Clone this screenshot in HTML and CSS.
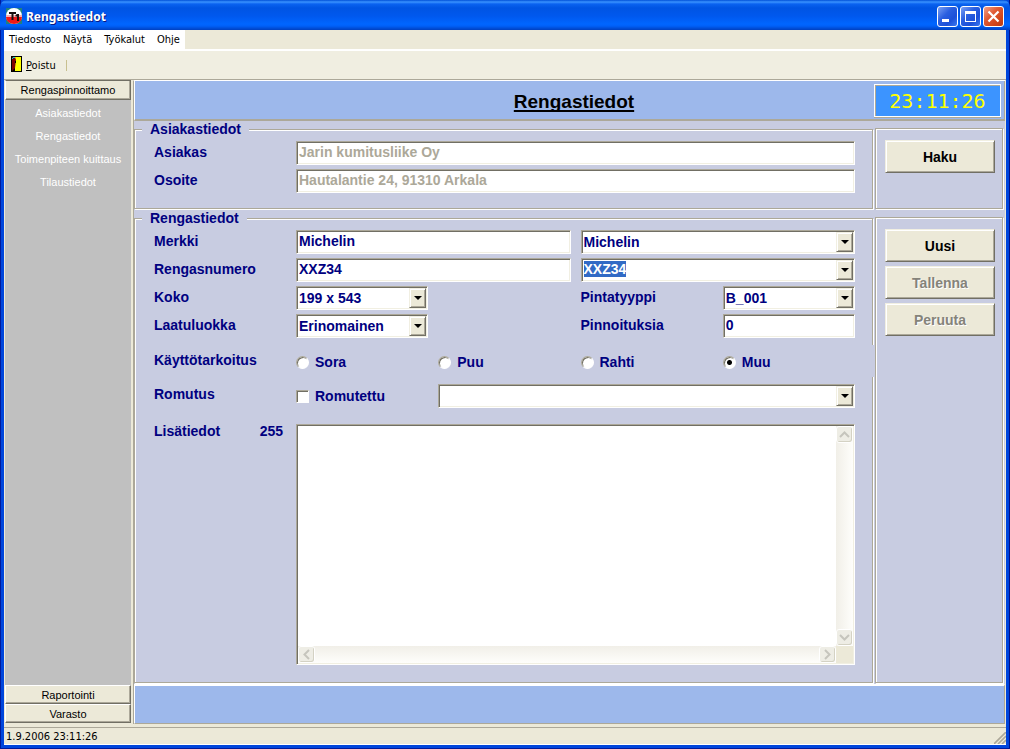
FILE: index.html
```html
<!DOCTYPE html>
<html lang="fi">
<head>
<meta charset="utf-8">
<title>Rengastiedot</title>
<link rel="stylesheet" href="styles.css">
</head>
<body>
<div class="window">
  <header class="titlebar">
    <svg class="app-icon" width="16" height="16" viewBox="0 0 16 16" aria-hidden="true">
      <rect width="16" height="16" fill="#1f8080"/>
      <circle cx="8" cy="8" r="8" fill="#fff"/>
      <path d="M0 9h16a8 7 0 0 1-16 0z" fill="#f01818"/>
      <path d="M0 7h16v2H0z" fill="#f8b0b0"/>
      <path d="M3 4h7v2H7.500v6h-2V6H3zM11 6h2v7h-2V8.500H9.500V7z" fill="#181010"/>
    </svg>
    <h1 class="titlebar-text">Rengastiedot</h1>
    <button class="caption-btn" type="button" aria-label="Pienennä"><svg width="19" height="19" viewBox="0 0 19 19"><path d="M4 12h7v3H4z" fill="#fff"/></svg></button>
    <button class="caption-btn" type="button" aria-label="Suurenna"><svg width="19" height="19" viewBox="0 0 19 19"><path d="M4 4h11v11H4zM5 7v7h9V7z" fill="#fff" fill-rule="evenodd"/></svg></button>
    <button class="caption-btn caption-close" type="button" aria-label="Sulje"><svg width="19" height="19" viewBox="0 0 19 19"><path d="M4.500 4.500l10 10M14.500 4.500l-10 10" stroke="#fff" stroke-width="2.200"/></svg></button>
  </header>

  <div class="client">
    <nav class="menubar">
      <div class="menu-items">
        <button type="button">Tiedosto</button>
        <button type="button">Näytä</button>
        <button type="button">Työkalut</button>
        <button type="button">Ohje</button>
      </div>
    </nav>
    <div class="toolbar">
      <button class="tool-btn" type="button">
        <svg width="11" height="16" viewBox="0 0 11 16" aria-hidden="true">
          <path d="M0 0h11v16H0z" fill="#000"/>
          <path d="M4 1h6v14H4z" fill="#ff0"/>
          <path d="M1 1h3l1 3-1 8-3 3z" fill="#800000"/>
          <path d="M2 1h2v1H2zM1 2h1v1H1z" fill="#00d8d8"/>
          <path d="M4 5h1v2H4z" fill="#000"/>
        </svg>
        <span><u>P</u>oistu</span>
      </button>
      <span class="tool-sep"></span>
    </div>

    <div class="workspace">
      <aside class="sidebar">
        <button class="side-head" type="button">Rengaspinnoittamo</button>
        <ul class="side-list">
          <li><a href="#">Asiakastiedot</a></li>
          <li><a href="#">Rengastiedot</a></li>
          <li><a href="#">Toimenpiteen kuittaus</a></li>
          <li><a href="#">Tilaustiedot</a></li>
        </ul>
        <button class="side-head" type="button">Raportointi</button>
        <button class="side-head" type="button">Varasto</button>
      </aside>

      <main class="main">
        <div class="banner">
          <h2 class="banner-title">Rengastiedot</h2>
          <time class="clock">23:11:26</time>
        </div>

        <form class="content">
          <fieldset class="group">
            <legend>Asiakastiedot</legend>
            <div class="rows">
              <div class="row">
                <label for="asiakas">Asiakas</label>
                <input class="field span4" id="asiakas" type="text" value="Jarin kumitusliike Oy" disabled>
              </div>
              <div class="row">
                <label for="osoite">Osoite</label>
                <input class="field span4" id="osoite" type="text" value="Hautalantie 24, 91310 Arkala" disabled>
              </div>
            </div>
          </fieldset>
          <div class="actions">
            <button class="btn" type="button">Haku</button>
          </div>

          <fieldset class="group">
            <legend>Rengastiedot</legend>
            <div class="rows">
              <div class="row">
                <label for="merkki">Merkki</label>
                <input class="field span2" id="merkki" type="text" value="Michelin">
                <div class="combo span2">
                  <select class="field" aria-label="Merkki, valinta"><option>Michelin</option></select>
                  <span class="arrow"></span>
                </div>
              </div>
              <div class="row">
                <label for="numero">Rengasnumero</label>
                <input class="field span2" id="numero" type="text" value="XXZ34">
                <div class="combo span2">
                  <input class="field" id="numero-valinta" type="text" value="XXZ34" aria-label="Rengasnumero, valinta">
                  <button class="arrow" type="button" aria-label="Avaa luettelo"></button>
                </div>
              </div>
              <div class="row">
                <label for="koko">Koko</label>
                <div class="combo">
                  <select class="field" id="koko"><option>199 x 543</option></select>
                  <span class="arrow"></span>
                </div>
                <label class="third" for="pinta">Pintatyyppi</label>
                <div class="combo">
                  <select class="field" id="pinta"><option>B_001</option></select>
                  <span class="arrow"></span>
                </div>
              </div>
              <div class="row">
                <label for="laatu">Laatuluokka</label>
                <div class="combo">
                  <select class="field" id="laatu"><option>Erinomainen</option></select>
                  <span class="arrow"></span>
                </div>
                <label class="third" for="pinnoituksia">Pinnoituksia</label>
                <input class="field" id="pinnoituksia" type="text" value="0">
              </div>
              <div class="row row-use" role="radiogroup" aria-labelledby="kaytto">
                <span id="kaytto">Käyttötarkoitus</span>
                <label class="choice"><input type="radio" name="kaytto">Sora</label>
                <label class="choice"><input type="radio" name="kaytto">Puu</label>
                <label class="choice"><input type="radio" name="kaytto">Rahti</label>
                <label class="choice"><input type="radio" name="kaytto" checked>Muu</label>
              </div>
              <div class="row row-scrap">
                <span>Romutus</span>
                <label class="choice"><input type="checkbox">Romutettu</label>
                <div class="combo span3">
                  <select class="field" aria-label="Romutuksen syy"><option></option></select>
                  <span class="arrow"></span>
                </div>
              </div>
              <div class="row row-notes">
                <div class="notes-label"><label for="lisa">Lisätiedot</label><output>255</output></div>
                <div class="memo span4">
                  <textarea id="lisa"></textarea>
                  <div class="vbar">
                    <span class="sbtn"><svg width="11" height="9" viewBox="0 0 11 9"><path d="M1 7l4.500-4.500L10 7"/></svg></span>
                    <span class="sbtn"><svg width="11" height="9" viewBox="0 0 11 9"><path d="M1 2l4.500 4.500L10 2"/></svg></span>
                  </div>
                  <div class="hbar">
                    <span class="sbtn"><svg width="9" height="11" viewBox="0 0 9 11"><path d="M7 1L2.500 5.500 7 10"/></svg></span>
                    <span class="sbtn"><svg width="9" height="11" viewBox="0 0 9 11"><path d="M2 1l4.500 4.500L2 10"/></svg></span>
                  </div>
                </div>
              </div>
            </div>
          </fieldset>
          <div class="actions">
            <button class="btn" type="button">Uusi</button>
            <button class="btn" type="button" disabled>Tallenna</button>
            <button class="btn" type="button" disabled>Peruuta</button>
          </div>
        </form>

        <div class="footer-band"></div>
      </main>
    </div>

    <footer class="statusbar">
      <span>1.9.2006 23:11:26</span>
      <svg width="12" height="12" viewBox="0 0 12 12" aria-hidden="true"><path d="M0 12L12 0M4 12l8-8M8 12l4-4" stroke="#aca899" stroke-width="1.600"/></svg>
    </footer>
  </div>
</div>
<script src="app.js"></script>
</body>
</html>
```
FILE: styles.css
```css
* { box-sizing: border-box; }

body {
  margin: 0;
  font-family: "Liberation Sans", Arial, sans-serif;
  font-size: 11px;
  color: #000;
}

button, input, select, textarea { font: inherit; color: inherit; border-radius: 0; }
button { padding: 0; border: 0; background: none; }

.window {
  display: flex;
  flex-direction: column;
  height: 100vh;
  padding: 0 4px 4px;
  background: #0046dc;
  box-shadow: inset 1px -1px 0 #001a9c, inset -1px 0 0 #00138c;
}

/* Title bar */
.titlebar {
  display: flex;
  align-items: center;
  gap: 2px;
  flex: none;
  height: 30px;
  margin: 0 -4px;
  padding: 2px 6px 0;
  border-radius: 7px 7px 0 0;
  background: linear-gradient(#0050d8 0, #3a93ff 2px, #0a62f0 4px, #0054e3 8px, #0058ee 16px, #0066ff 24px, #0060f8 26px, #0040c0 30px);
}
.titlebar-text {
  flex: 1;
  margin: 2px 0 0 2px;
  font: bold 12px/20px "Noto Sans", sans-serif;
  color: #fff;
  text-shadow: 1px 1px 0 #0a1883;
}
.caption-btn {
  width: 21px;
  height: 21px;
  border: 1px solid #fff;
  border-radius: 3px;
  background: linear-gradient(135deg, #7aa0f4, #2a5fe0 40%, #1c50d8 70%, #3a78f0);
}
.caption-btn svg { display: block; }
.caption-close { background: linear-gradient(135deg, #f0a088, #e05a34 40%, #d04418 75%, #b83c18); }

.client {
  display: flex;
  flex-direction: column;
  flex: 1;
  min-height: 0;
  background: #ece9d8;
  font-family: "DejaVu Sans Condensed", "DejaVu Sans", sans-serif;
}

/* Menu and toolbar */
.menubar {
  display: flex;
  height: 21px;
  border-bottom: 2px solid #fff;
}
.menu-items {
  display: flex;
  gap: 12px;
  padding: 0 5px;
  background: #fff;
}
.toolbar {
  display: flex;
  align-items: center;
  gap: 10px;
  height: 28px;
  padding: 0 7px;
  background: #f0eee1;
}
.tool-btn { display: flex; align-items: center; gap: 4px; }
.tool-btn svg { margin-bottom: 2px; }
.tool-sep { width: 1px; height: 11px; background: #c8c090; }

.workspace {
  display: flex;
  flex: 1;
  gap: 2px;
  min-height: 0;
  border-top: 1px solid #aca899;
}

/* Sidebar */
.sidebar {
  display: flex;
  flex-direction: column;
  width: 126px;
  margin: 0 0 1px 1px;
  background: #c0c0c0;
  font-family: "Liberation Sans", Arial, sans-serif;
}
.side-head {
  height: 19px;
  border: 1px solid;
  border-color: #fff #716f64 #716f64 #fff;
  box-shadow: inset -1px -1px 0 #aca899;
  background: #ece9d8;
}
.side-head:first-child { height: 20px; border-top-color: #716f64; }
.side-list {
  flex: 1;
  margin: 0;
  padding: 2px 0;
  list-style: none;
  text-align: center;
  line-height: 23px;
}
.side-list a { color: #fff; text-decoration: none; }

/* Main panel */
.main {
  display: flex;
  flex-direction: column;
  flex: 1;
  min-width: 0;
  margin-right: 1px;
  border-left: 1px solid #aca899;
  border-top: 1px solid #fff;
  background: #c8cce1;
  font-family: "Liberation Sans", Arial, sans-serif;
}
.banner {
  display: grid;
  grid-template-columns: 1fr auto 1fr;
  align-items: center;
  height: 40px;
  padding: 0 3px 0 12px;
  border-left: 1px solid #fff;
  border-right: 1px solid #aca899;
  border-bottom: 2px solid #aca899;
  background: #9db8eb;
}
.banner-title {
  grid-column: 2;
  margin: 4px 0 0;
  font-size: 19px;
  line-height: 24px;
  text-decoration: underline;
  text-decoration-thickness: 2px;
  text-underline-offset: 2px;
  text-decoration-skip-ink: none;
}
.clock {
  justify-self: end;
  width: 127px;
  padding-top: 1px;
  border: 1px solid #fff;
  box-shadow: inset 1px 1px 0 #aca899, 0 1px 0 #aca899;
  background: #3c94ff;
  color: #ff0;
  font: 20px/30px "DejaVu Sans Mono", monospace;
  text-align: center;
}

.content {
  display: grid;
  grid-template-columns: minmax(0, 1fr) 128px;
  grid-template-rows: 88px minmax(0, 1fr);
  gap: 1px 2px;
  flex: 1;
  min-height: 0;
  padding: 0 2px 1px 0;
  color: #000080;
  font-size: 14px;
  font-weight: bold;
  line-height: 16px;
}
.group {
  display: flex;
  flex-direction: column;
  min-width: 0;
  margin: 0;
  padding: 4px 17px 17px 19px;
  border: 1px solid #aca899;
  box-shadow: 1px 1px 0 #fff, inset 1px 1px 0 #fff;
}
.group legend {
  margin-left: -12px;
  padding: 0 8px;
  background: #c8cce1;
}
.rows { display: flex; flex-direction: column; flex: 1; gap: 4px; min-height: 0; }
.row {
  display: grid;
  grid-template-columns: 132px repeat(4, minmax(0, 1fr));
  column-gap: 10px;
  line-height: 22px;
}
.span2 { grid-column: span 2; }
.span3 { grid-column: span 3; }
.span4 { grid-column: span 4; }
.third { grid-column: 4; }

.field {
  width: 100%;
  height: 24px;
  padding: 0 2px 2px;
  appearance: none;
  outline: none;
  border: 1px solid;
  border-color: #aca899 #fff #fff #aca899;
  box-shadow: inset 1px 1px 0 #716f64, inset -1px -1px 0 #f1efe2;
  background: #fff;
}
.field:disabled { color: #aca899; opacity: 1; }
.field::selection { background: #316ac5; color: #fff; }
.combo { position: relative; }
.combo .field { display: block; padding-right: 20px; }
.combo select.field { padding-bottom: 4px; }
.arrow {
  position: absolute;
  top: 2px;
  right: 2px;
  display: flex;
  align-items: center;
  justify-content: center;
  width: 17px;
  height: 20px;
  border: 1px solid;
  border-color: #f1efe2 #716f64 #716f64 #f1efe2;
  box-shadow: inset 1px 1px 0 #fff, inset -1px -1px 0 #aca899;
  background: #ece9d8;
  pointer-events: none;
}
.arrow::before {
  content: "";
  border: 4px solid transparent;
  border-top-color: #000;
  border-bottom: 0;
}

.row-use {
  position: relative;
  height: 32px;
  margin: 3px -19px 3px 0;
  padding: 4px 19px 4px 0;
  background: #c8cce1;
}
.choice { display: flex; align-items: center; gap: 6px; height: 24px; }
.row-use .choice { height: 26px; }
.choice input {
  width: 13px;
  height: 13px;
  margin: 0;
  appearance: none;
  border: 1px solid;
  border-color: #aca899 #fff #fff #aca899;
  box-shadow: inset 1px 1px 0 #716f64;
  background: #fff;
}
.choice input[type="radio"] { border-radius: 50%; }
.choice input[type="radio"]:checked { background: radial-gradient(circle, #000 2px, #fff 3px); }
.row-scrap { line-height: 20px; }

.row-notes { flex: 1; min-height: 0; margin-top: 12px; line-height: 14px; }
.notes-label { display: flex; justify-content: space-between; padding-right: 3px; }
.memo {
  display: grid;
  grid-template: minmax(0, 1fr) 17px / minmax(0, 1fr) 17px;
  padding: 1px;
  border: 1px solid;
  border-color: #aca899 #fff #fff #aca899;
  box-shadow: inset 1px 1px 0 #716f64, inset -1px -1px 0 #f1efe2;
  background: #ece9d8;
}
.memo textarea {
  width: 100%;
  height: 100%;
  padding: 2px;
  border: 0;
  outline: none;
  resize: none;
  overflow: hidden;
}
.vbar, .hbar { display: flex; justify-content: space-between; }
.vbar { flex-direction: column; background: linear-gradient(90deg, #f1efe8, #fefefb); }
.hbar { background: linear-gradient(#f1efe8, #fefefb); }
.sbtn {
  display: grid;
  place-items: center;
  width: 17px;
  height: 17px;
  border: 1px solid #fff;
  border-radius: 3px;
  box-shadow: inset -1px -1px 0 #d4d2c4;
  background: #eeede5;
}
.sbtn path { fill: none; stroke: #c6c5bd; stroke-width: 2; }

/* Action buttons */
.actions {
  display: flex;
  flex-direction: column;
  gap: 4px;
  margin-top: 7px;
  padding: 11px 7px 11px 9px;
  border: 1px solid #aca899;
  box-shadow: 1px 1px 0 #fff, inset 1px 1px 0 #fff;
}
.btn {
  height: 33px;
  border: 1px solid;
  border-color: #f1efe2 #716f64 #716f64 #f1efe2;
  box-shadow: inset 1px 1px 0 #fff, inset -1px -1px 0 #aca899;
  background: #ece9d8;
  color: #000;
}
.btn:disabled { color: #85837a; text-shadow: 1px 1px 0 #fff; }

.footer-band {
  height: 40px;
  border: 1px solid;
  border-width: 2px 1px 1px;
  border-color: #fff #aca899 #aca899 #fff;
  background: #9db8eb;
}

.statusbar {
  display: flex;
  align-items: center;
  justify-content: space-between;
  height: 18px;
  margin-top: 3px;
  padding-left: 2px;
  border-top: 1px solid #aca899;
  border-bottom: 1px solid #fff;
}
.statusbar svg { align-self: end; }
```
FILE: app.js
```js
document.getElementById("numero-valinta").select();
```
